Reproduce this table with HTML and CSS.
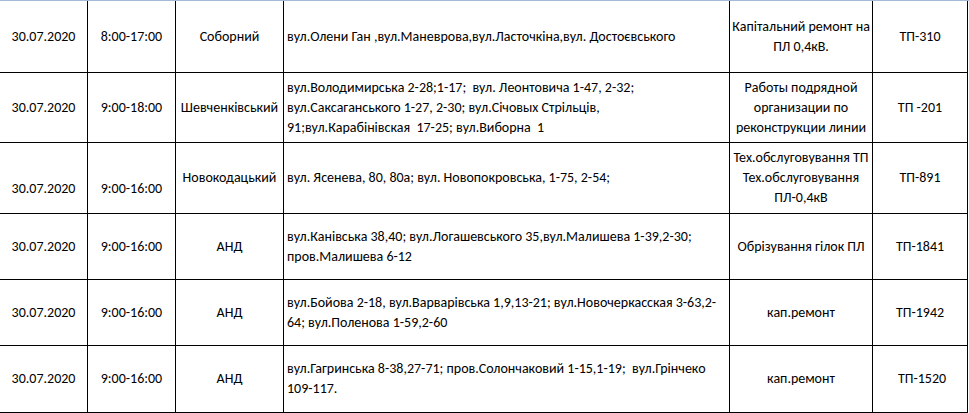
FILE: index.html
```html
<!DOCTYPE html>
<html lang="uk">
<head>
<meta charset="utf-8">
<title>Відключення</title>
<link rel="stylesheet" href="styles.css">
</head>
<body>
<div class="sheet">
<table class="grid">
<tr class="r1">
<td class="c-date">30.07.2020</td>
<td class="c-time">8:00-17:00</td>
<td class="c-dist">Соборний</td>
<td class="c-addr">вул.Олени Ган ,вул.Маневрова,вул.Ласточкіна,вул. Достоєвського</td>
<td class="c-work">Капітальний ремонт на<br>ПЛ 0,4кВ.</td>
<td class="c-tp">ТП-310</td>
</tr>
<tr class="r2">
<td>30.07.2020</td>
<td>9:00-18:00</td>
<td class="c-dist">Шевченківський</td>
<td class="c-addr">вул.Володимирська 2-28;1-17;&nbsp; вул. Леонтовича 1-47, 2-32;<br>вул.Саксаганського 1-27, 2-30; вул.Січовых Стрільців,<br>91;вул.Карабінівская&nbsp; 17-25; вул.Виборна&nbsp; 1</td>
<td class="c-work">Работы подрядной<br>организации по<br>реконструкции линии</td>
<td>ТП -201</td>
</tr>
<tr class="r3">
<td class="low">30.07.2020</td>
<td class="low">9:00-16:00</td>
<td class="c-dist">Новокодацький</td>
<td class="c-addr">вул. Ясенева, 80, 80а; вул. Новопокровська, 1-75, 2-54;</td>
<td class="c-work">Тех.обслуговування ТП<br>Тех.обслуговування<br>ПЛ-0,4кВ</td>
<td>ТП-891</td>
</tr>
<tr class="r4">
<td>30.07.2020</td>
<td>9:00-16:00</td>
<td class="c-dist">АНД</td>
<td class="c-addr">вул.Канівська 38,40; вул.Логашевського 35,вул.Малишева 1-39,2-30;<br>пров.Малишева 6-12</td>
<td class="c-work">Обрізування гілок ПЛ</td>
<td>ТП-1841</td>
</tr>
<tr class="r5">
<td>30.07.2020</td>
<td>9:00-16:00</td>
<td class="c-dist">АНД</td>
<td class="c-addr">вул.Бойова 2-18, вул.Варварівська 1,9,13-21; вул.Новочеркасская 3-63,2-<br>64; вул.Поленова 1-59,2-60</td>
<td class="c-work">кап.ремонт</td>
<td>ТП-1942</td>
</tr>
<tr class="r6">
<td>30.07.2020</td>
<td>9:00-16:00</td>
<td class="c-dist">АНД</td>
<td class="c-addr">вул.Гагринська 8-38,27-71; пров.Солончаковий 1-15,1-19;&nbsp; вул.Грінчеко<br>109-117.</td>
<td class="c-work">кап.ремонт</td>
<td class="shift">ТП-1520</td>
</tr>
</table>
</div>
</body>
</html>
```
FILE: styles.css
```css
html, body {
  margin: 0;
  padding: 0;
  background: #ffffff;
}

.sheet {
  width: 969px;
  border-top: 1px solid #a3bad9;
}

.grid {
  border-collapse: separate;
  border-spacing: 0;
  table-layout: fixed;
  width: 968px;
  font-family: Carlito, Calibri, Lato, sans-serif;
  font-size: 14px;
  line-height: 20px;
  color: #000000;
}

.grid td {
  box-sizing: border-box;
  border-right: 1px solid #000000;
  border-bottom: 1px solid #000000;
  padding: 0 2px;
  text-align: center;
  vertical-align: middle;
  white-space: nowrap;
  overflow: hidden;
}

.c-date { width: 88px; }
.c-time { width: 88px; }
.c-dist { width: 108px; }
.c-addr { width: 446px; }
.c-work { width: 143px; }
.c-tp { width: 95px; }

.grid td.c-dist {
  padding: 0 1px;
}

.grid td.c-addr {
  text-align: left;
  padding: 0 3px 0 3px;
}

.grid td.low {
  padding-top: 21px;
}

.grid td.shift {
  padding-left: 6px;
}

.r1 td { height: 72px; }
.r2 td { height: 70px; }
.r3 td { height: 71px; }
.r4 td { height: 66px; }
.r5 td { height: 66px; }
.r6 td { height: 67px; }
```
